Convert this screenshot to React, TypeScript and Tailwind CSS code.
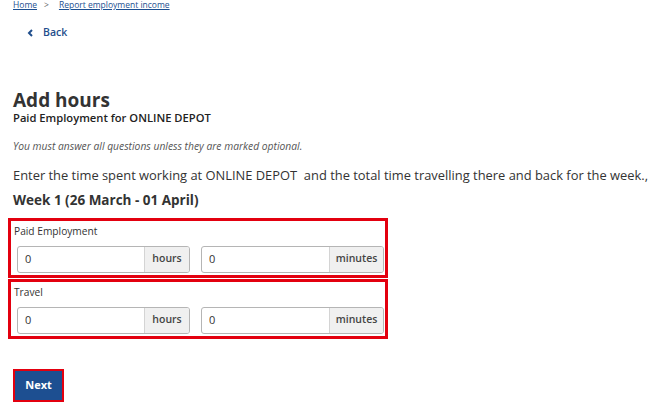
export default function App() {
  const rows = [
    { label: 'Paid Employment', hours: '0', minutes: '0' },
    { label: 'Travel', hours: '0', minutes: '0' },
  ];

  return (
    <div className="min-h-screen bg-white text-[#333] overflow-hidden font-['Open_Sans',sans-serif]">
      <div className="pl-[13px]">
        <nav className="-mt-[1px] flex items-center text-[8.5px] leading-[12px] text-[#1d4f91]">
          <a href="#" className="underline">Home</a>
          <span className="ml-[7px] mr-[10px] text-[#666]">&gt;</span>
          <a href="#" className="underline">Report employment income</a>
        </nav>

        <a href="#" className="mt-[14px] ml-[14px] flex items-center gap-[10px] text-[10.5px] font-semibold text-[#1f4e8c]">
          <svg width="6" height="8" viewBox="0 0 6 8" className="mt-[1px]">
            <path d="M5 1 L2 4 L5 7" fill="none" stroke="currentColor" strokeWidth="2" />
          </svg>
          Back
        </a>

        <h1 className="mt-[48px] text-[19px] leading-[22px] font-bold text-[#333]">Add hours</h1>
        <h2 className="text-[11.2px] leading-[14px] font-semibold text-[#222]">Paid Employment for ONLINE DEPOT</h2>

        <p className="mt-[14px] text-[10.3px] leading-[14px] italic text-[#555]">
          You must answer all questions unless they are marked optional.
        </p>

        <p className="mt-[13px] text-[12.9px] leading-[18px] whitespace-nowrap text-[#333]">
          Enter the time spent working at ONLINE DEPOT&nbsp; and the total time travelling there and back for the week.,
        </p>

        <h3 className="mt-[7px] text-[13.5px] leading-[18px] font-bold text-[#333]">Week 1 (26 March - 01 April)</h3>
      </div>

      <div className="ml-[8px] mt-[9px] w-[380px] flex flex-col gap-[1px]">
        {rows.map((row) => (
          <div key={row.label} className="border-[3px] border-[#e3000f] pl-[3px] pr-[1px] pt-[3px] pb-[2px]">
            <label className="block text-[10.2px] leading-[14px] text-[#333]">{row.label}</label>
            <div className="mt-[8px] flex gap-[11px] pl-[3px]">
              <div className="flex h-[27px] w-[174px] rounded-[3px] border border-[#b5b5b5] overflow-hidden">
                <input
                  readOnly
                  value={row.hours}
                  className="min-w-0 flex-1 px-[7px] text-[11px] text-[#333] outline-none"
                />
                <span className="flex w-[45px] items-center justify-center border-l border-[#d4d4d4] bg-[#f0f0f0] text-[10.5px] font-semibold text-[#444]">
                  hours
                </span>
              </div>
              <div className="flex h-[27px] w-[184px] rounded-[3px] border border-[#b5b5b5] overflow-hidden">
                <input
                  readOnly
                  value={row.minutes}
                  className="min-w-0 flex-1 px-[7px] text-[11px] text-[#333] outline-none"
                />
                <span className="flex w-[54px] items-center justify-center border-l border-[#d4d4d4] bg-[#f0f0f0] text-[10.5px] font-semibold text-[#444]">
                  minutes
                </span>
              </div>
            </div>
          </div>
        ))}
      </div>

      <div className="ml-[13px] mt-[30px]">
        <button className="h-[33px] w-[51px] border-2 border-[#e3000f] bg-[#1d4f91] text-[11px] font-bold text-white">
          Next
        </button>
      </div>
    </div>
  );
}
